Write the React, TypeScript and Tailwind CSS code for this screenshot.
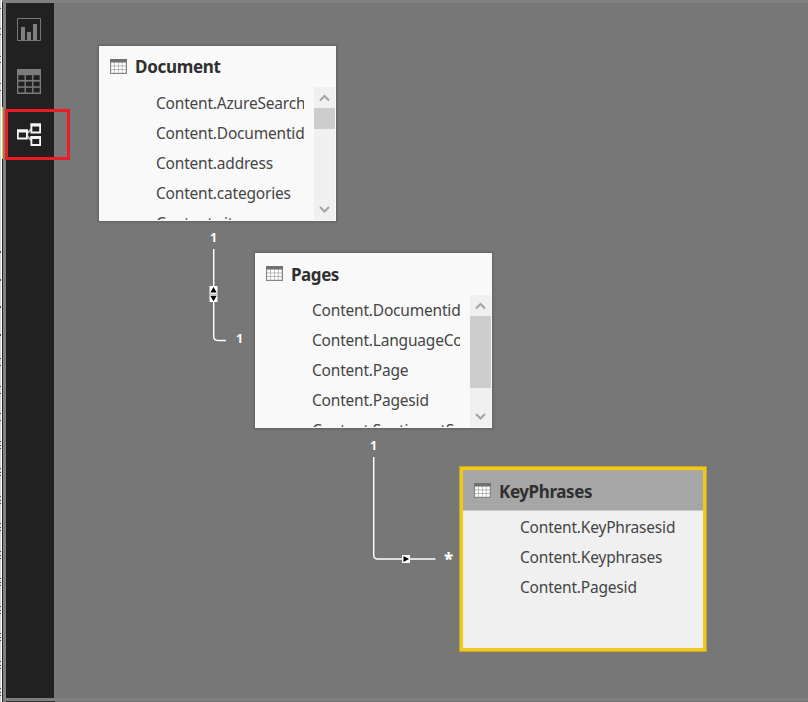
import React from "react";

const SANS = "font-['Noto_Sans','Open_Sans',sans-serif]";

function TableIcon() {
  return (
    <svg width="17" height="16" viewBox="0 0 17 16" className="shrink-0">
      <rect x="0" y="0" width="17" height="15" fill="#858585" />
      <rect x="0" y="0" width="17" height="3" fill="#707070" />
      <rect x="1" y="3.5" width="15" height="10.5" fill="#b0b0b0" />
      {[3.8, 7.4, 11].map((y) =>
        [1.2, 5, 8.8, 12.6].map((x) => (
          <rect key={`${x}-${y}`} x={x} y={y} width="3" height="2.7" fill="#fff" />
        )),
      )}
    </svg>
  );
}

function Chevron({ up = false }: { up?: boolean }) {
  return (
    <svg width="21" height="21" viewBox="0 0 21 21" fill="none" stroke="#a3a3a3" strokeWidth="2">
      <path d={up ? "M6 13.5 10.5 9 15 13.5" : "M6 8 10.5 12.5 15 8"} />
    </svg>
  );
}

type CardProps = {
  title: string;
  titleClass: string;
  fields: string[];
  place: string;
  headerClass: string;
  listClass: string;
  thumb: string;
};

function TableCard({ title, titleClass, fields, place, headerClass, listClass, thumb }: CardProps) {
  return (
    <section
      className={`absolute flex h-[177px] w-[239px] flex-col border border-[#676767] bg-[#f9f9f9] shadow-[0_0_2px_#606060] ${place}`}
    >
      <header className={`flex shrink-0 items-center gap-2 pl-[11px] ${headerClass}`}>
        <TableIcon />
        <h2 className={`text-[17px] leading-6 font-bold text-[#303030] ${titleClass}`}>{title}</h2>
      </header>
      <div className="flex min-h-0 flex-1 pr-px pb-px">
        <ul className={`w-[205px] overflow-hidden pl-[57px] ${listClass}`}>
          {fields.map((f) => (
            <li
              key={f}
              className="h-[30px] text-[15.5px] leading-[30px] tracking-[-0.2px] whitespace-nowrap text-[#454545]"
            >
              {f}
            </li>
          ))}
        </ul>
        <div className="ml-auto flex w-[21px] flex-col bg-[#f0f0f0]">
          <Chevron up />
          <div className={`shrink-0 bg-[#cdcdcd] ${thumb}`} />
          <div className="mt-auto">
            <Chevron />
          </div>
        </div>
      </div>
    </section>
  );
}

function SelectedCard() {
  return (
    <section className="absolute top-[466px] left-[459px] h-[186px] w-[248px] border border-[#c3a62d] bg-[#f1c817] p-[3px]">
      <div className="h-full bg-[#f0f0f0]">
        <header className="flex h-[41px] items-center gap-2 border-t border-b border-t-[#b5ad8c] border-b-[#c9c9c9] bg-[#a6a6a6] pl-[11px]">
          <TableIcon />
          <h2 className="pt-0.5 text-[17px] leading-6 font-bold tracking-[-0.4px] text-[#303030]">KeyPhrases</h2>
        </header>
        <ul className="pl-[57px] pt-px">
          {["Content.KeyPhrasesid", "Content.Keyphrases", "Content.Pagesid"].map((f) => (
            <li key={f} className="h-[30px] text-[15.5px] leading-[30px] tracking-[-0.2px] text-[#454545]">
              {f}
            </li>
          ))}
        </ul>
      </div>
    </section>
  );
}

function Links() {
  return (
    <svg className="absolute top-0 left-0" width="808" height="702" viewBox="0 0 808 702" fill="none">
      <path d="M213.7 249V336q0 4.5 4 4.5H226" stroke="#fff" strokeWidth="1.4" />
      <rect x="209.5" y="286" width="8" height="16" fill="#fff" />
      <path d="M210.3 292.5 213.5 287 216.7 292.5ZM210.3 295.8 213.5 301.2 216.7 295.8Z" fill="#000" />
      <path d="M209.5 294.2H217.5" stroke="#999" strokeWidth="0.8" />
      <path d="M373.7 457V555q0 4 4 4H435.5" stroke="#fff" strokeWidth="1.4" />
      <rect x="402" y="555" width="8" height="8" fill="#fff" />
      <path d="M403.5 556 409 559 403.5 562Z" fill="#000" />
    </svg>
  );
}

function ReportIcon() {
  return (
    <svg width="24" height="24" viewBox="0 0 24 24" fill="#7f7f7f">
      <path d="M.5.5h23v22H.5z" fill="none" stroke="#777" />
      <path d="M4 9h4v13H4zM10 14h4v8h-4zM16 6h4v16h-4z" />
    </svg>
  );
}

function DataIcon() {
  return (
    <svg width="24" height="25" viewBox="0 0 24 25">
      <path d="M0 0h24v25H0z" fill="#7c7c7c" />
      {[6.2, 12.6, 18.8].map((y) =>
        [1.3, 8.9, 16.5].map((x) => (
          <rect key={`${x}-${y}`} x={x} y={y} width="6.2" height="4.7" fill="#212121" />
        )),
      )}
    </svg>
  );
}

function ModelIcon() {
  return (
    <svg width="24" height="24" viewBox="0 0 24 24" fill="none" stroke="#f4f4f4">
      <path d="M9.5 11 14.5 6M9.5 12.5 14.5 17.5" stroke="#bbb" strokeWidth="2" />
      <path d="M.9 7.5h9v8H.9zM14.4 1.5h8.7v8h-8.7zM14.4 14h8.7v8h-8.7z" fill="#212121" strokeWidth="1.8" />
      <path d="M0 8h10.8M13.5 2H24M13.5 14.5H24" strokeWidth="3.2" />
    </svg>
  );
}

const TICKS = [
  251, 279, 306, 334, 358, 365, 386, 393, 413, 420, 441, 445, 448, 468, 472, 475, 496, 500, 503, 523, 527, 530, 551,
  555, 558, 578, 582, 585, 606, 610, 613, 633, 637, 640, 661, 665, 668, 688, 692, 695,
];

export default function App() {
  return (
    <div className={`relative flex h-[702px] w-[808px] overflow-hidden bg-[#777777] ${SANS}`}>
      <svg width="3" height="702" shapeRendering="crispEdges" className="shrink-0">
        <path d="M0 0h1v702H0z" fill="#d5d5d5" />
        <path d="M1 0h1v702H1z" fill="#fff" />
        <path d="M2 2h1v700H2z" fill="#252525" />
        {[8, 28, 34, 56, 62, 83, 90].map((y) => (
          <rect key={y} x="0" y={y} width="1" height="1" fill="#555" />
        ))}
        {TICKS.map((y) => (
          <rect key={y} x="0" y={y} width="1" height={y < 340 ? 2 : 1} fill={y === 279 ? "#805600" : "#444"} />
        ))}
        <path d="M2 107h1v52H2z" fill="#f2c811" />
      </svg>
      <div className="flex flex-1 flex-col border-t-[3px] border-l-[3px] border-[#808080]">
        <div className="flex flex-1">
          <nav className="flex w-12 flex-col items-start bg-[#212121] pt-[15px] pl-[11px]">
            <ReportIcon />
            <div className="mt-[27px]">
              <DataIcon />
            </div>
            <div className="mt-[29px]">
              <ModelIcon />
            </div>
          </nav>
          <main className="flex-1 bg-[#777777]" />
        </div>
        <div className="h-[3px] bg-[#808080]" />
        <div className="flex h-px">
          <div className="w-[49px] bg-[#303030]" />
          <div className="flex-1 bg-[#707070]" />
        </div>
      </div>
      <div className="absolute top-[109px] left-[5px] h-[51px] w-[65px] border-3 border-[#ed1c24]" />
      <Links />
      <span className="absolute top-[230px] left-[210px] text-[12.5px] leading-4 font-bold text-white">1</span>
      <span className="absolute top-[331px] left-[236px] text-[12.5px] leading-4 font-bold text-white">1</span>
      <span className="absolute top-[438px] left-[370px] text-[12.5px] leading-4 font-bold text-white">1</span>
      <span className="absolute top-[550px] left-[444px] text-[17px] leading-5 font-extrabold text-white">*</span>
      <TableCard
        title="Document"
        titleClass="tracking-[-0.3px]"
        place="top-[45px] left-[98px]"
        headerClass="h-[41px]"
        listClass="pt-px"
        thumb="h-[21px]"
        fields={["Content.AzureSearch", "Content.Documentid", "Content.address", "Content.categories", "Content.city"]}
      />
      <TableCard
        title="Pages"
        titleClass="pt-px tracking-[-0.45px]"
        place="top-[252px] left-[254px]"
        headerClass="h-[42px]"
        listClass=""
        thumb="h-[72px]"
        fields={["Content.Documentid", "Content.LanguageCode", "Content.Page", "Content.Pagesid", "Content.SentimentScore"]}
      />
      <SelectedCard />
    </div>
  );
}
